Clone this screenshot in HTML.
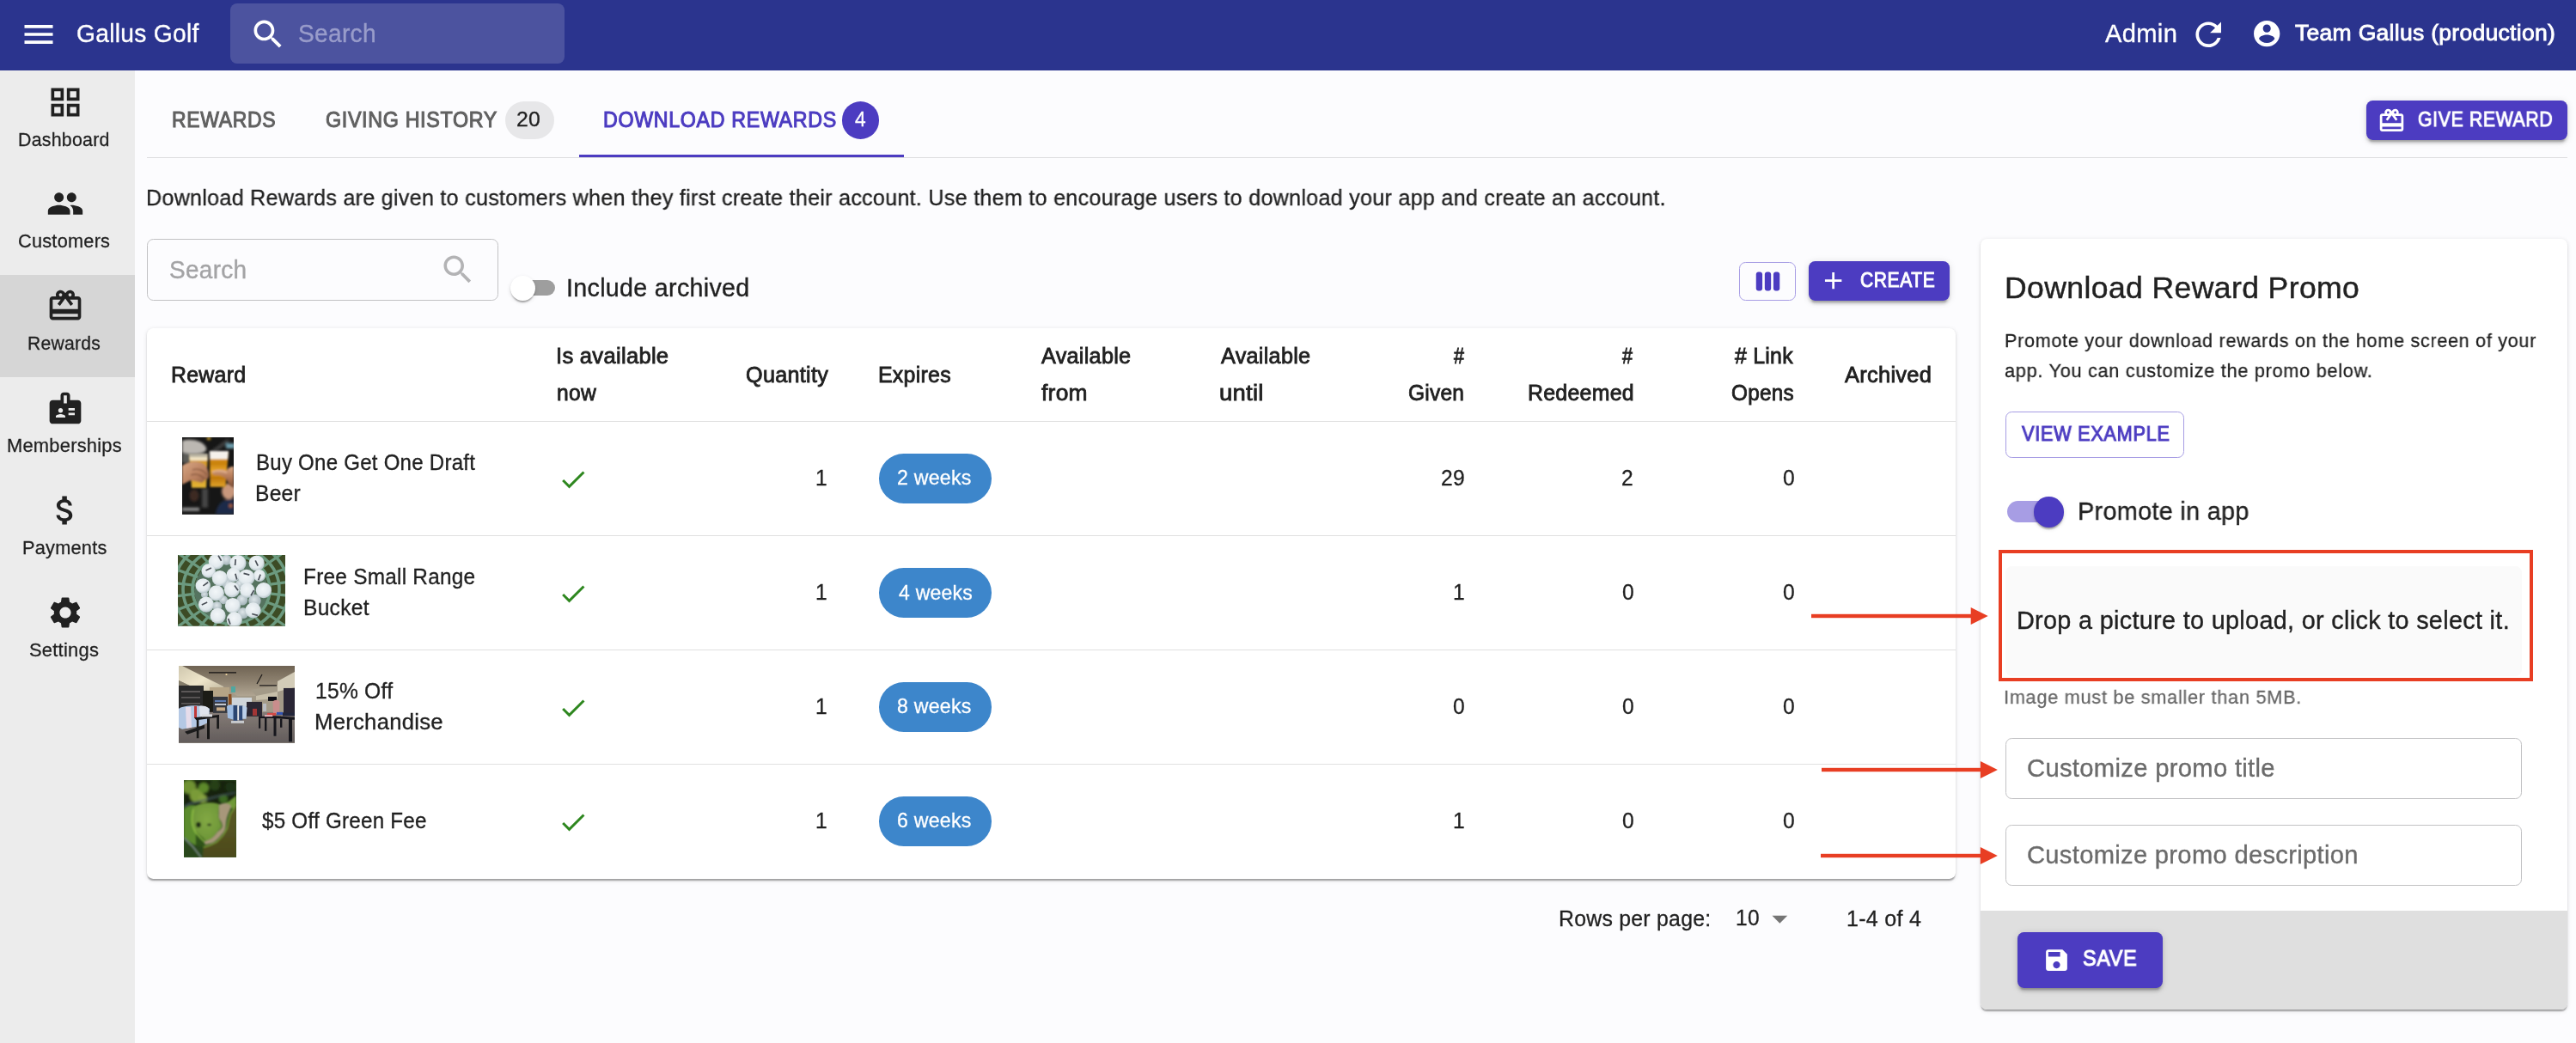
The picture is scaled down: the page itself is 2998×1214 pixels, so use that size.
<!DOCTYPE html>
<html lang="en"><head><meta charset="utf-8"><title>Gallus Golf - Download Rewards</title>
<style>
html,body{margin:0;padding:0}
html{width:2998px;height:1214px;overflow:hidden;}
body{width:2998px;height:1214px;position:relative;overflow:hidden;background:#fcfcfe;font-family:"Liberation Sans", sans-serif;}
.t{position:absolute;white-space:nowrap;line-height:1;transform-origin:0 0;}
#root{position:absolute;left:0;top:0;width:2998px;height:1214px;will-change:transform;}
.b{position:absolute;box-sizing:border-box;}
.ic{position:absolute;display:block;}
svg.th{position:absolute;display:block;}
</style></head>
<body>
<div id="root">
<div class="b" style="left:0.00px;top:0.00px;width:2998.00px;height:81.50px;background:#2b348e;"></div>
<svg class="ic" style="left:22.50px;top:18.00px;width:44.00px;height:44.00px" viewBox="0 0 24 24" fill="#fff" ><path d="M3 18h18v-2H3v2zm0-5h18v-2H3v2zm0-7v2h18V6H3z"/></svg>
<span class="t" id="brand" style="left:89.02px;top:24.35px;font-size:30.30px;color:#fff;letter-spacing:0.324px;-webkit-text-stroke:0.36px #fff;transform:scaleX(0.9303);">Gallus Golf</span>
<div class="b" style="left:268.00px;top:4.00px;width:389.00px;height:70.00px;background:rgba(255,255,255,.155);border-radius:8px;"></div>
<svg class="ic" style="left:289.50px;top:17.50px;width:44.00px;height:44.00px" viewBox="0 0 24 24" fill="#fff" ><path d="M15.5 14h-.79l-.28-.27C15.41 12.59 16 11.11 16 9.5 16 5.91 13.09 3 9.5 3S3 5.91 3 9.5 5.91 16 9.5 16c1.61 0 3.09-.59 4.23-1.57l.27.28v.79l5 4.99L20.49 19l-4.99-5zm-6 0C7.01 14 5 11.99 5 9.5S7.01 5 9.5 5 14 7.01 14 9.5 11.99 14 9.5 14z"/></svg>
<span class="t" id="absearch" style="left:347.00px;top:23.94px;font-size:29.60px;color:#999cca;letter-spacing:0.317px;-webkit-text-stroke:0.36px #999cca;transform:scaleX(0.9500);">Search</span>
<span class="t" id="admin" style="left:2450.00px;top:24.35px;font-size:30.30px;color:#fff;letter-spacing:0.324px;-webkit-text-stroke:0.36px #fff;transform:scaleX(0.9619);">Admin</span>
<svg class="ic" style="left:2547.60px;top:18.00px;width:44.40px;height:44.40px" viewBox="0 0 24 24" fill="#fff" ><path d="M17.65 6.35C16.2 4.9 14.21 4 12 4c-4.42 0-7.99 3.58-7.99 8s3.57 8 7.99 8c3.73 0 6.84-2.55 7.73-6h-2.08c-.82 2.33-3.04 4-5.65 4-3.31 0-6-2.69-6-6s2.69-6 6-6c1.66 0 3.14.69 4.22 1.78L13 11h7V4l-2.35 2.35z"/></svg>
<svg class="ic" style="left:2620.00px;top:20.50px;width:36.40px;height:36.40px" viewBox="0 0 24 24" fill="#fff" ><path d="M12 2C6.48 2 2 6.48 2 12s4.48 10 10 10 10-4.48 10-10S17.52 2 12 2zm0 3c1.66 0 3 1.34 3 3s-1.34 3-3 3-3-1.34-3-3 1.34-3 3-3zm0 14.2c-2.5 0-4.71-1.28-6-3.22.03-1.99 4-3.08 6-3.08 1.99 0 5.97 1.09 6 3.08-1.29 1.94-3.5 3.22-6 3.22z"/></svg>
<span class="t" id="team" style="left:2671.00px;top:26.08px;font-size:25.90px;color:#fff;letter-spacing:0.277px;-webkit-text-stroke:0.83px #fff;transform:scaleX(1.0244);">Team Gallus (production)</span>
<div class="b" style="left:0.00px;top:81.50px;width:157.00px;height:1132.50px;background:#ececec;"></div>
<div class="b" style="left:0.00px;top:319.80px;width:157.00px;height:118.80px;background:#d6d6d6;"></div>
<svg class="ic" style="left:53.50px;top:96.50px;width:44.00px;height:44.00px" viewBox="0 0 24 24" fill="#212121" ><path d="M3 3v8h8V3H3zm6 6H5V5h4v4zm-6 4v8h8v-8H3zm6 6H5v-4h4v4zm4-16v8h8V3h-8zm6 6h-4V5h4v4zm-6 4v8h8v-8h-8zm6 6h-4v-4h4v4z"/></svg>
<span class="t" id="side0" style="left:21.49px;top:152.21px;font-size:22.20px;color:#212121;letter-spacing:0.238px;-webkit-text-stroke:0.27px #212121;transform:scaleX(0.9632);">Dashboard</span>
<svg class="ic" style="left:53.50px;top:215.30px;width:44.00px;height:44.00px" viewBox="0 0 24 24" fill="#212121" ><path d="M16 11c1.66 0 2.99-1.34 2.99-3S17.66 5 16 5c-1.66 0-3 1.34-3 3s1.34 3 3 3zm-8 0c1.66 0 2.99-1.34 2.99-3S9.66 5 8 5C6.34 5 5 6.34 5 8s1.34 3 3 3zm0 2c-2.33 0-7 1.17-7 3.5V19h14v-2.5c0-2.33-4.67-3.5-7-3.5zm8 0c-.29 0-.62.02-.97.05 1.16.84 1.97 1.97 1.97 3.45V19h6v-2.5c0-2.33-4.67-3.5-7-3.5z"/></svg>
<span class="t" id="side1" style="left:20.98px;top:270.21px;font-size:22.20px;color:#212121;letter-spacing:0.238px;-webkit-text-stroke:0.27px #212121;transform:scaleX(0.9800);">Customers</span>
<svg class="ic" style="left:53.50px;top:334.10px;width:44.00px;height:44.00px" viewBox="0 0 24 24" fill="#212121" ><path d="M20 6h-2.18c.11-.31.18-.65.18-1 0-1.66-1.34-3-3-3-1.05 0-1.96.54-2.5 1.35l-.5.67-.5-.68C10.96 2.54 10.05 2 9 2 7.34 2 6 3.34 6 5c0 .35.07.69.18 1H4c-1.11 0-1.99.89-1.99 2L2 19c0 1.11.89 2 2 2h16c1.11 0 2-.89 2-2V8c0-1.11-.89-2-2-2zm-5-2c.55 0 1 .45 1 1s-.45 1-1 1-1-.45-1-1 .45-1 1-1zM9 4c.55 0 1 .45 1 1s-.45 1-1 1-1-.45-1-1 .45-1 1-1zm11 15H4v-2h16v2zm0-5H4V8h5.08L7 10.83 8.62 12 11 8.76l1-1.36 1 1.36L15.38 12 17 10.83 14.92 8H20v6z"/></svg>
<span class="t" id="side2" style="left:32.49px;top:389.21px;font-size:22.20px;color:#212121;letter-spacing:0.238px;-webkit-text-stroke:0.27px #212121;transform:scaleX(0.9526);">Rewards</span>
<svg class="ic" style="left:53.50px;top:452.90px;width:44.00px;height:44.00px" viewBox="0 0 24 24" fill="#212121" ><path d="M20 7h-5V4c0-1.1-.9-2-2-2h-2c-1.1 0-2 .9-2 2v3H4c-1.1 0-2 .9-2 2v11c0 1.1.9 2 2 2h16c1.1 0 2-.9 2-2V9c0-1.1-.9-2-2-2zM9 12c.83 0 1.5.67 1.5 1.5S9.83 15 9 15s-1.5-.67-1.5-1.5S8.17 12 9 12zm3 6H6v-.75c0-1 2-1.5 3-1.5s3 .5 3 1.5V18zm1-9h-2V4h2v5zm5 7.5h-4V15h4v1.5zm0-3h-4V12h4v1.5z"/></svg>
<span class="t" id="side3" style="left:7.96px;top:508.21px;font-size:22.20px;color:#212121;letter-spacing:0.238px;-webkit-text-stroke:0.27px #212121;transform:scaleX(0.9861);">Memberships</span>
<svg class="ic" style="left:53.50px;top:571.70px;width:44.00px;height:44.00px" viewBox="0 0 24 24" fill="#212121" ><path d="M11.8 10.9c-2.27-.59-3-1.2-3-2.15 0-1.09 1.01-1.85 2.7-1.85 1.78 0 2.44.85 2.5 2.1h2.21c-.07-1.72-1.12-3.3-3.21-3.81V3h-3v2.16c-1.94.42-3.5 1.68-3.5 3.61 0 2.31 1.91 3.46 4.7 4.13 2.5.6 3 1.48 3 2.41 0 .69-.49 1.79-2.7 1.79-2.06 0-2.87-.92-2.98-2.1h-2.2c.12 2.19 1.76 3.42 3.68 3.83V21h3v-2.15c1.95-.37 3.5-1.5 3.5-3.55 0-2.84-2.43-3.81-4.7-4.4z"/></svg>
<span class="t" id="side4" style="left:25.97px;top:627.21px;font-size:22.20px;color:#212121;letter-spacing:0.238px;-webkit-text-stroke:0.27px #212121;transform:scaleX(0.9803);">Payments</span>
<svg class="ic" style="left:53.50px;top:690.50px;width:44.00px;height:44.00px" viewBox="0 0 24 24" fill="#212121" ><path d="M19.14 12.94c.04-.3.06-.61.06-.94 0-.32-.02-.64-.07-.94l2.03-1.58c.18-.14.23-.41.12-.61l-1.92-3.32c-.12-.22-.37-.29-.59-.22l-2.39.96c-.5-.38-1.03-.7-1.62-.94l-.36-2.54c-.04-.24-.24-.41-.48-.41h-3.84c-.24 0-.43.17-.47.41l-.36 2.54c-.59.24-1.13.57-1.62.94l-2.39-.96c-.22-.08-.47 0-.59.22L2.74 8.87c-.12.21-.08.47.12.61l2.03 1.58c-.05.3-.09.63-.09.94s.02.64.07.94l-2.03 1.58c-.18.14-.23.41-.12.61l1.92 3.32c.12.22.37.29.59.22l2.39-.96c.5.38 1.03.7 1.62.94l.36 2.54c.05.24.24.41.48.41h3.84c.24 0 .44-.17.47-.41l.36-2.54c.59-.24 1.13-.56 1.62-.94l2.39.96c.22.08.47 0 .59-.22l1.92-3.32c.12-.22.07-.47-.12-.61l-2.01-1.58zM12 15.6c-1.98 0-3.6-1.62-3.6-3.6s1.62-3.6 3.6-3.6 3.6 1.62 3.6 3.6-1.62 3.6-3.6 3.6z"/></svg>
<span class="t" id="side5" style="left:34.44px;top:746.21px;font-size:22.20px;color:#212121;letter-spacing:0.238px;-webkit-text-stroke:0.27px #212121;transform:scaleX(0.9880);">Settings</span>
<div class="b" style="left:171.00px;top:182.90px;width:2817.00px;height:1.20px;background:#dcdcde;"></div>
<span class="t" id="tab1" style="left:200.03px;top:126.84px;font-size:25.00px;color:#616161;letter-spacing:0.715px;-webkit-text-stroke:1.05px #616161;transform:scaleX(0.9191);">REWARDS</span>
<span class="t" id="tab2" style="left:379.00px;top:126.84px;font-size:25.00px;color:#616161;letter-spacing:0.715px;-webkit-text-stroke:1.05px #616161;transform:scaleX(0.9314);">GIVING HISTORY</span>
<div class="b" style="left:588.00px;top:118.00px;width:57.00px;height:44.20px;background:#e7e7e9;border-radius:22.1px;"></div>
<span class="t" id="b20" style="left:601.27px;top:126.68px;font-size:24.00px;color:#212121;letter-spacing:0.257px;-webkit-text-stroke:0.29px #212121;transform:scaleX(1.0336);">20</span>
<span class="t" id="tab3" style="left:702.02px;top:126.84px;font-size:25.00px;color:#4c3cc1;letter-spacing:0.715px;-webkit-text-stroke:1.05px #4c3cc1;transform:scaleX(0.9294);">DOWNLOAD REWARDS</span>
<div class="b" style="left:979.70px;top:118.00px;width:43.60px;height:44.20px;background:#4c3cc1;border-radius:22.1px;"></div>
<span class="t" id="b4" style="left:995.00px;top:126.68px;font-size:24.00px;color:#fff;letter-spacing:0.257px;-webkit-text-stroke:0.29px #fff;transform:scaleX(0.9500);">4</span>
<div class="b" style="left:674.30px;top:179.60px;width:377.70px;height:3.50px;background:#4c3cc1;"></div>
<div class="b" style="left:2754.00px;top:117.10px;width:234.10px;height:45.60px;background:#4c3cc1;border-radius:7.4px;box-shadow:0 5.5px 2px -3.7px rgba(0,0,0,.2),0 3.7px 3.7px rgba(0,0,0,.14),0 1.8px 9px rgba(0,0,0,.12);"></div>
<svg class="ic" style="left:2767.20px;top:124.00px;width:33.00px;height:33.00px" viewBox="0 0 24 24" fill="#fff" ><path d="M20 6h-2.18c.11-.31.18-.65.18-1 0-1.66-1.34-3-3-3-1.05 0-1.96.54-2.5 1.35l-.5.67-.5-.68C10.96 2.54 10.05 2 9 2 7.34 2 6 3.34 6 5c0 .35.07.69.18 1H4c-1.11 0-1.99.89-1.99 2L2 19c0 1.11.89 2 2 2h16c1.11 0 2-.89 2-2V8c0-1.11-.89-2-2-2zm-5-2c.55 0 1 .45 1 1s-.45 1-1 1-1-.45-1-1 .45-1 1-1zM9 4c.55 0 1 .45 1 1s-.45 1-1 1-1-.45-1-1 .45-1 1-1zm11 15H4v-2h16v2zm0-5H4V8h5.08L7 10.83 8.62 12 11 8.76l1-1.36 1 1.36L15.38 12 17 10.83 14.92 8H20v6z"/></svg>
<span class="t" id="give" style="left:2814.04px;top:126.68px;font-size:24.00px;color:#fff;letter-spacing:0.686px;-webkit-text-stroke:1.01px #fff;transform:scaleX(0.8871);">GIVE REWARD</span>
<span class="t" id="desc" style="left:170.36px;top:218.08px;font-size:25.90px;color:#212121;letter-spacing:0.277px;-webkit-text-stroke:0.31px #212121;transform:scaleX(0.9703);">Download Rewards are given to customers when they first create their account. Use them to encourage users to download your app and create an account.</span>
<div class="b" style="left:171.20px;top:278.30px;width:408.60px;height:71.60px;border:1.5px solid #c2c2c4;border-radius:7.4px;"></div>
<span class="t" id="fsearch" style="left:196.71px;top:298.94px;font-size:29.60px;color:#a3a3a5;letter-spacing:0.317px;-webkit-text-stroke:0.36px #a3a3a5;transform:scaleX(0.9459);">Search</span>
<svg class="ic" style="left:510.60px;top:291.60px;width:43.50px;height:43.50px" viewBox="0 0 24 24" fill="#b3b3b5" ><path d="M15.5 14h-.79l-.28-.27C15.41 12.59 16 11.11 16 9.5 16 5.91 13.09 3 9.5 3S3 5.91 3 9.5 5.91 16 9.5 16c1.61 0 3.09-.59 4.23-1.57l.27.28v.79l5 4.99L20.49 19l-4.99-5zm-6 0C7.01 14 5 11.99 5 9.5S7.01 5 9.5 5 14 7.01 14 9.5 11.99 14 9.5 14z"/></svg>
<div class="b" style="left:609.00px;top:326.10px;width:37.00px;height:17.60px;background:#9e9e9e;border-radius:9px;"></div>
<div class="b" style="left:594.00px;top:321.00px;width:29.00px;height:29.00px;background:#fff;border-radius:50%;box-shadow:0 3.7px 2px -1.8px rgba(0,0,0,.2),0 1.8px 1.8px rgba(0,0,0,.14),0 1.8px 5.5px rgba(0,0,0,.12);"></div>
<span class="t" id="incl" style="left:658.56px;top:319.94px;font-size:29.60px;color:#212121;letter-spacing:0.317px;-webkit-text-stroke:0.36px #212121;transform:scaleX(0.9684);">Include archived</span>
<div class="b" style="left:2024.00px;top:305.20px;width:65.80px;height:44.40px;border:1.3px solid #a79de4;border-radius:7.4px;"></div>
<svg class="ic" style="left:2040.75px;top:310.50px;width:33.00px;height:33.00px" viewBox="0 0 24 24" fill="#4c3cc1" ><path d="M5.33 20H4c-1.1 0-2-.9-2-2V6c0-1.1.9-2 2-2h1.33c1.1 0 2 .9 2 2v12c0 1.1-.9 2-2 2zM22 18V6c0-1.1-.9-2-2-2h-1.33c-1.1 0-2 .9-2 2v12c0 1.1.9 2 2 2H20c1.1 0 2-.9 2-2zm-7.33 0V6c0-1.1-.9-2-2-2h-1.33c-1.1 0-2 .9-2 2v12c0 1.1.9 2 2 2h1.33c1.1 0 2-.9 2-2z"/></svg>
<div class="b" style="left:2105.00px;top:304.00px;width:164.10px;height:45.60px;background:#4c3cc1;border-radius:7.4px;box-shadow:0 5.5px 2px -3.7px rgba(0,0,0,.2),0 3.7px 3.7px rgba(0,0,0,.14),0 1.8px 9px rgba(0,0,0,.12);"></div>
<svg class="ic" style="left:2116.50px;top:310.30px;width:33.30px;height:33.30px" viewBox="0 0 24 24" fill="#fff" ><path d="M19 13h-6v6h-2v-6H5v-2h6V5h2v6h6v2z"/></svg>
<span class="t" id="create" style="left:2165.37px;top:313.68px;font-size:24.00px;color:#fff;letter-spacing:0.686px;-webkit-text-stroke:1.01px #fff;transform:scaleX(0.8768);">CREATE</span>
<div class="b" style="left:171.00px;top:381.60px;width:2105.10px;height:641.00px;background:#fff;border-radius:7.4px;box-shadow:0 3.7px 1.8px -1.8px rgba(0,0,0,.2),0 1.8px 1.8px rgba(0,0,0,.14),0 1.8px 5.5px rgba(0,0,0,.12);"></div>
<span class="t" id="h_reward" style="left:198.99px;top:424.08px;font-size:25.90px;color:#212121;letter-spacing:0.277px;-webkit-text-stroke:0.83px #212121;transform:scaleX(0.9613);">Reward</span>
<span class="t" id="h_isav" style="left:646.91px;top:402.08px;font-size:25.90px;color:#212121;letter-spacing:0.277px;-webkit-text-stroke:0.83px #212121;transform:scaleX(0.9889);">Is available</span>
<span class="t" id="t1" style="left:648.00px;top:445.08px;font-size:25.90px;color:#212121;letter-spacing:0.277px;-webkit-text-stroke:0.83px #212121;transform:scaleX(0.9500);">now</span>
<span class="t" id="h_qty" style="left:868.46px;top:424.08px;font-size:25.90px;color:#212121;letter-spacing:0.277px;-webkit-text-stroke:0.83px #212121;transform:scaleX(0.9739);">Quantity</span>
<span class="t" id="h_exp" style="left:1022.47px;top:424.08px;font-size:25.90px;color:#212121;letter-spacing:0.277px;-webkit-text-stroke:0.83px #212121;transform:scaleX(0.9616);">Expires</span>
<span class="t" id="h_av1" style="left:1212.01px;top:402.08px;font-size:25.90px;color:#212121;letter-spacing:0.277px;-webkit-text-stroke:0.83px #212121;transform:scaleX(0.9748);">Available</span>
<span class="t" id="h_from" style="left:1211.79px;top:445.08px;font-size:25.90px;color:#212121;letter-spacing:0.277px;-webkit-text-stroke:0.83px #212121;transform:scaleX(1.0184);">from</span>
<span class="t" id="h_av2" style="left:1420.51px;top:402.08px;font-size:25.90px;color:#212121;letter-spacing:0.277px;-webkit-text-stroke:0.83px #212121;transform:scaleX(0.9748);">Available</span>
<span class="t" id="h_until" style="left:1418.74px;top:445.08px;font-size:25.90px;color:#212121;letter-spacing:0.277px;-webkit-text-stroke:0.83px #212121;transform:scaleX(1.0585);">until</span>
<span class="t" id="h_hash1" style="left:1691.96px;top:402.08px;font-size:25.90px;color:#212121;letter-spacing:0.277px;-webkit-text-stroke:0.83px #212121;transform:scaleX(0.8316);">#</span>
<span class="t" id="h_given" style="left:1639.41px;top:445.08px;font-size:25.90px;color:#212121;letter-spacing:0.277px;-webkit-text-stroke:0.83px #212121;transform:scaleX(0.9452);">Given</span>
<span class="t" id="h_hash2" style="left:1887.66px;top:402.08px;font-size:25.90px;color:#212121;letter-spacing:0.277px;-webkit-text-stroke:0.83px #212121;transform:scaleX(0.8315);">#</span>
<span class="t" id="h_red" style="left:1778.08px;top:445.08px;font-size:25.90px;color:#212121;letter-spacing:0.277px;-webkit-text-stroke:0.83px #212121;transform:scaleX(0.9613);">Redeemed</span>
<span class="t" id="h_link" style="left:2019.38px;top:402.08px;font-size:25.90px;color:#212121;letter-spacing:0.277px;-webkit-text-stroke:0.83px #212121;transform:scaleX(0.9596);"># Link</span>
<span class="t" id="h_opens" style="left:2015.37px;top:445.08px;font-size:25.90px;color:#212121;letter-spacing:0.277px;-webkit-text-stroke:0.83px #212121;transform:scaleX(0.9379);">Opens</span>
<span class="t" id="h_arch" style="left:2147.24px;top:424.08px;font-size:25.90px;color:#212121;letter-spacing:0.277px;-webkit-text-stroke:0.83px #212121;transform:scaleX(0.9826);">Archived</span>
<div class="b" style="left:171.00px;top:490.00px;width:2105.00px;height:1.20px;background:#e0e0e0;"></div>
<span class="t" id="r0a" style="left:298.04px;top:526.13px;font-size:25.90px;color:#212121;letter-spacing:0.277px;-webkit-text-stroke:0.31px #212121;transform:scaleX(0.9280);">Buy One Get One Draft</span>
<span class="t" id="r0b" style="left:297.00px;top:561.83px;font-size:25.90px;color:#212121;letter-spacing:0.277px;-webkit-text-stroke:0.31px #212121;transform:scaleX(0.9500);">Beer</span>
<svg class="ic" style="left:649.10px;top:540.15px;width:36.00px;height:36.00px" viewBox="0 0 24 24" fill="#2e871f" ><path d="M9 16.17 4.83 12l-1.42 1.41L9 19 21 7l-1.41-1.41z"/></svg>
<span class="t" id="t2" style="left:948.60px;top:543.98px;font-size:25.90px;color:#212121;letter-spacing:0.277px;-webkit-text-stroke:0.31px #212121;transform:scaleX(0.9500);">1</span>
<div class="b" style="left:1023.00px;top:528.10px;width:131.00px;height:57.60px;background:#3d86cb;border-radius:28.8px;"></div>
<span class="t" id="chip0" style="left:1044.32px;top:543.98px;font-size:24.00px;color:#fff;letter-spacing:0.257px;-webkit-text-stroke:0.29px #fff;transform:scaleX(0.9642);">2 weeks</span>
<span class="t" id="t3" style="left:1676.70px;top:543.98px;font-size:25.90px;color:#212121;letter-spacing:0.277px;-webkit-text-stroke:0.31px #212121;transform:scaleX(0.9500);">29</span>
<span class="t" id="t4" style="left:1886.80px;top:543.98px;font-size:25.90px;color:#212121;letter-spacing:0.277px;-webkit-text-stroke:0.31px #212121;transform:scaleX(0.9500);">2</span>
<span class="t" id="t5" style="left:2074.70px;top:543.98px;font-size:25.90px;color:#212121;letter-spacing:0.277px;-webkit-text-stroke:0.31px #212121;transform:scaleX(0.9500);">0</span>
<div class="b" style="left:171.00px;top:623.20px;width:2105.00px;height:1.20px;background:#e0e0e0;"></div>
<span class="t" id="r1a" style="left:353.02px;top:659.33px;font-size:25.90px;color:#212121;letter-spacing:0.277px;-webkit-text-stroke:0.31px #212121;transform:scaleX(0.9405);">Free Small Range</span>
<span class="t" id="r1b" style="left:353.00px;top:695.03px;font-size:25.90px;color:#212121;letter-spacing:0.277px;-webkit-text-stroke:0.31px #212121;transform:scaleX(0.9500);">Bucket</span>
<svg class="ic" style="left:649.10px;top:673.35px;width:36.00px;height:36.00px" viewBox="0 0 24 24" fill="#2e871f" ><path d="M9 16.17 4.83 12l-1.42 1.41L9 19 21 7l-1.41-1.41z"/></svg>
<span class="t" id="t6" style="left:949.00px;top:677.18px;font-size:25.90px;color:#212121;letter-spacing:0.277px;-webkit-text-stroke:0.31px #212121;transform:scaleX(0.9500);">1</span>
<div class="b" style="left:1023.00px;top:661.30px;width:131.00px;height:57.60px;background:#3d86cb;border-radius:28.8px;"></div>
<span class="t" id="chip1" style="left:1045.56px;top:678.18px;font-size:24.00px;color:#fff;letter-spacing:0.257px;-webkit-text-stroke:0.29px #fff;transform:scaleX(0.9581);">4 weeks</span>
<span class="t" id="t7" style="left:1691.00px;top:677.18px;font-size:25.90px;color:#212121;letter-spacing:0.277px;-webkit-text-stroke:0.31px #212121;transform:scaleX(0.9500);">1</span>
<span class="t" id="t8" style="left:1887.50px;top:677.18px;font-size:25.90px;color:#212121;letter-spacing:0.277px;-webkit-text-stroke:0.31px #212121;transform:scaleX(0.9500);">0</span>
<span class="t" id="t9" style="left:2075.00px;top:677.18px;font-size:25.90px;color:#212121;letter-spacing:0.277px;-webkit-text-stroke:0.31px #212121;transform:scaleX(0.9500);">0</span>
<div class="b" style="left:171.00px;top:756.00px;width:2105.00px;height:1.20px;background:#e0e0e0;"></div>
<span class="t" id="r2a" style="left:367.00px;top:792.13px;font-size:25.90px;color:#212121;letter-spacing:0.277px;-webkit-text-stroke:0.31px #212121;transform:scaleX(0.9500);">15% Off</span>
<span class="t" id="r2b" style="left:365.91px;top:827.83px;font-size:25.90px;color:#212121;letter-spacing:0.277px;-webkit-text-stroke:0.31px #212121;transform:scaleX(0.9906);">Merchandise</span>
<svg class="ic" style="left:649.10px;top:806.15px;width:36.00px;height:36.00px" viewBox="0 0 24 24" fill="#2e871f" ><path d="M9 16.17 4.83 12l-1.42 1.41L9 19 21 7l-1.41-1.41z"/></svg>
<span class="t" id="t10" style="left:949.00px;top:809.98px;font-size:25.90px;color:#212121;letter-spacing:0.277px;-webkit-text-stroke:0.31px #212121;transform:scaleX(0.9500);">1</span>
<div class="b" style="left:1023.00px;top:794.10px;width:131.00px;height:57.60px;background:#3d86cb;border-radius:28.8px;"></div>
<span class="t" id="chip2" style="left:1044.32px;top:809.98px;font-size:24.00px;color:#fff;letter-spacing:0.257px;-webkit-text-stroke:0.29px #fff;transform:scaleX(0.9642);">8 weeks</span>
<span class="t" id="t11" style="left:1691.00px;top:809.98px;font-size:25.90px;color:#212121;letter-spacing:0.277px;-webkit-text-stroke:0.31px #212121;transform:scaleX(0.9500);">0</span>
<span class="t" id="t12" style="left:1887.50px;top:809.98px;font-size:25.90px;color:#212121;letter-spacing:0.277px;-webkit-text-stroke:0.31px #212121;transform:scaleX(0.9500);">0</span>
<span class="t" id="t13" style="left:2075.00px;top:809.98px;font-size:25.90px;color:#212121;letter-spacing:0.277px;-webkit-text-stroke:0.31px #212121;transform:scaleX(0.9500);">0</span>
<div class="b" style="left:171.00px;top:889.00px;width:2105.00px;height:1.20px;background:#e0e0e0;"></div>
<span class="t" id="r3a" style="left:305.00px;top:942.98px;font-size:25.90px;color:#212121;letter-spacing:0.277px;-webkit-text-stroke:0.31px #212121;transform:scaleX(0.9334);">$5 Off Green Fee</span>
<svg class="ic" style="left:649.10px;top:939.15px;width:36.00px;height:36.00px" viewBox="0 0 24 24" fill="#2e871f" ><path d="M9 16.17 4.83 12l-1.42 1.41L9 19 21 7l-1.41-1.41z"/></svg>
<span class="t" id="t14" style="left:949.00px;top:942.98px;font-size:25.90px;color:#212121;letter-spacing:0.277px;-webkit-text-stroke:0.31px #212121;transform:scaleX(0.9500);">1</span>
<div class="b" style="left:1023.00px;top:927.10px;width:131.00px;height:57.60px;background:#3d86cb;border-radius:28.8px;"></div>
<span class="t" id="chip3" style="left:1044.32px;top:942.98px;font-size:24.00px;color:#fff;letter-spacing:0.257px;-webkit-text-stroke:0.29px #fff;transform:scaleX(0.9642);">6 weeks</span>
<span class="t" id="t15" style="left:1691.00px;top:942.98px;font-size:25.90px;color:#212121;letter-spacing:0.277px;-webkit-text-stroke:0.31px #212121;transform:scaleX(0.9500);">1</span>
<span class="t" id="t16" style="left:1887.50px;top:942.98px;font-size:25.90px;color:#212121;letter-spacing:0.277px;-webkit-text-stroke:0.31px #212121;transform:scaleX(0.9500);">0</span>
<span class="t" id="t17" style="left:2075.00px;top:942.98px;font-size:25.90px;color:#212121;letter-spacing:0.277px;-webkit-text-stroke:0.31px #212121;transform:scaleX(0.9500);">0</span>
<svg class="th" style="left:212.00px;top:509.00px;width:60.00px;height:89.80px" viewBox="0 0 60 90" preserveAspectRatio="none">
<defs>
<linearGradient id="bg1" x1="0" y1="0" x2="0" y2="1"><stop offset="0" stop-color="#d9a233"/><stop offset=".6" stop-color="#cf9422"/><stop offset="1" stop-color="#e6b836"/></linearGradient>
<linearGradient id="bg2" x1="0" y1="0" x2="0" y2="1"><stop offset="0" stop-color="#e59f1e"/><stop offset=".35" stop-color="#c9820f"/><stop offset=".55" stop-color="#e8a728"/><stop offset=".75" stop-color="#bf780e"/><stop offset="1" stop-color="#e3a62a"/></linearGradient>
<linearGradient id="hand1" x1="0" y1="0" x2="1" y2="1"><stop offset="0" stop-color="#d7a684"/><stop offset=".6" stop-color="#b87f5e"/><stop offset="1" stop-color="#8a5a40"/></linearGradient>
<linearGradient id="hand2" x1="0" y1="0" x2="0" y2="1"><stop offset="0" stop-color="#dba884"/><stop offset=".5" stop-color="#b47a58"/><stop offset="1" stop-color="#7d4e36"/></linearGradient>
<filter id="bl1" x="-10%" y="-10%" width="120%" height="120%"><feGaussianBlur stdDeviation="0.9"/></filter>
<filter id="bl1b" x="-10%" y="-10%" width="120%" height="120%"><feGaussianBlur stdDeviation="1.8"/></filter>
<clipPath id="cb"><rect width="60" height="90"/></clipPath>
</defs>
<rect width="60" height="90" fill="#161616"/>
<g clip-path="url(#cb)">
<g filter="url(#bl1b)">
<path d="M0 4 C10 1 24 4 28 12 C30 18 20 20 8 19 L0 18 Z" fill="#bcb8b2"/>
<rect x="0" y="19" width="26" height="11" fill="#5c5b58"/>
<path d="M30 18 L52 2 L56 4 L34 22 Z" fill="#3a3a3a"/>
<rect x="51" y="7" width="10" height="6" fill="#6d9cab"/>
<rect x="29" y="0" width="4" height="3" fill="#d8a92a"/>
<ellipse cx="14" cy="68" rx="5.5" ry="7" fill="#3d2a22"/>
<rect x="23" y="60" width="7" height="22" fill="#444"/>
<ellipse cx="54" cy="63" rx="8" ry="9.5" fill="#c8977c"/>
<path d="M39 90 C40 78 48 71 60 72 L60 90 Z" fill="#1f2b49"/>
<rect x="0" y="82" width="20" height="4" fill="#8d8d8d"/>
<circle cx="56.5" cy="80" r="2" fill="#b8683a"/>
</g>
<g filter="url(#bl1)">
<path d="M8 19 L30 19 L28 59 L11 59 Z" fill="url(#bg1)"/>
<path d="M8 19 L30 19 L29.8 23 L8.2 23 Z" fill="#b9b3a2"/>
<path d="M8.3 23 L29.8 23 L29.6 27 L8.6 27 Z" fill="#f1e3c2"/>
<path d="M32 16 L54 16 L50.5 58 L32.5 58 Z" fill="url(#bg2)"/>
<path d="M32 16 L54 16 L53.2 25.5 L32.1 25.5 Z" fill="#f5f1eb"/>
<path d="M0 33 C6 28 16 27 23 30 C28 32 31 38 31 44 C31 48 29 50 27 49 C25 52 22 54 20 52 L10 50 L0 55 Z" fill="url(#hand1)"/>
<path d="M12 38 C18 36 25 38 29 44 M10 44 C16 42 22 44 26 49" stroke="#8a5a40" stroke-width="1.4" fill="none"/>
<path d="M60 34 C56 34 53 36 52 39 C46 37 38 38 35 40 C34 42 36 44 40 44 C45 44 50 46 52 50 C54 55 57 58 60 58 Z" fill="url(#hand2)"/>
<path d="M35 40.5 C40 38.5 47 39 52 41" stroke="#e6b794" stroke-width="1.6" fill="none"/>
</g>
</g>
</svg>
<svg class="th" style="left:207.00px;top:646.00px;width:125.00px;height:82.80px" viewBox="0 0 125 83" preserveAspectRatio="none">
<defs>
<radialGradient id="ball" cx=".45" cy=".4" r=".65"><stop offset="0" stop-color="#f2f6f8"/><stop offset=".65" stop-color="#e2e9ed"/><stop offset="1" stop-color="#a9babf"/></radialGradient>
<radialGradient id="ballb" cx=".45" cy=".4" r=".65"><stop offset="0" stop-color="#dfe6ea"/><stop offset="1" stop-color="#9fb0b5"/></radialGradient>
<filter id="bl2" x="-5%" y="-5%" width="110%" height="110%"><feGaussianBlur stdDeviation="0.6"/></filter>
<clipPath id="cg"><rect width="125" height="83"/></clipPath>
</defs>
<rect width="125" height="83" fill="#3c4b25"/>
<g clip-path="url(#cg)"><g filter="url(#bl2)">
<g fill="none" stroke="#6c9a7f" stroke-width="3.6">
<ellipse cx="62" cy="40" rx="45" ry="40"/>
<ellipse cx="62" cy="40" rx="56" ry="50"/>
<ellipse cx="62" cy="40" rx="67" ry="60"/>
<ellipse cx="62" cy="40" rx="79" ry="71"/>
<path d="M101.7 44.4 L161.3 51.0 M99.1 53.5 L154.7 73.7 M93.9 61.7 L141.9 94.2 M86.6 68.4 L123.6 110.9 M77.6 73.1 L101.1 122.8 M67.6 75.6 L75.9 129.1 M57.1 75.7 L49.8 129.3 M47.0 73.4 L24.5 123.4 M37.9 68.8 L1.8 111.9 M30.5 62.2 L-16.8 95.4 M25.2 54.1 L-30.1 75.2 M22.4 45.0 L-37.0 52.5 M22.3 35.6 L-37.3 29.0 M24.9 26.5 L-30.7 6.3 M30.1 18.3 L-17.9 -14.2 M37.4 11.6 L0.4 -30.9 M46.4 6.9 L22.9 -42.8 M56.4 4.4 L48.1 -49.1 M66.9 4.3 L74.2 -49.3 M77.0 6.6 L99.5 -43.4 M86.1 11.2 L122.2 -31.9 M93.5 17.8 L140.8 -15.4 M98.8 25.9 L154.1 4.8 M101.6 35.0 L161.0 27.5 " stroke-width="3.2"/></g><ellipse cx="62" cy="41" rx="43" ry="38" fill="#55735e"/><circle cx="45.7" cy="59.6" r="5.5" fill="url(#ballb)"/><circle cx="74.9" cy="52.3" r="6.4" fill="url(#ballb)"/><circle cx="89.4" cy="53.2" r="7.3" fill="url(#ballb)"/><circle cx="75.8" cy="67.8" r="6.4" fill="url(#ballb)"/><circle cx="56.6" cy="5.8" r="6" fill="url(#ballb)"/><circle cx="53" cy="52.3" r="5" fill="url(#ballb)"/><circle cx="31" cy="46" r="4" fill="url(#ballb)"/><circle cx="57" cy="33" r="6" fill="url(#ballb)"/><circle cx="72" cy="34" r="5" fill="url(#ballb)"/><circle cx="44.8" cy="7.7" r="9.1" fill="url(#ball)"/><circle cx="91.7" cy="9.5" r="9.1" fill="url(#ball)"/><circle cx="69.9" cy="9.5" r="9.6" fill="url(#ball)"/><circle cx="35.7" cy="18.6" r="8.2" fill="url(#ball)"/><circle cx="94.9" cy="24" r="7" fill="url(#ball)"/><circle cx="64.8" cy="23.1" r="8.2" fill="url(#ball)"/><circle cx="48.9" cy="27.2" r="9.1" fill="url(#ball)"/><circle cx="79.9" cy="26.3" r="9.6" fill="url(#ball)"/><circle cx="29.3" cy="35.9" r="8.7" fill="url(#ball)"/><circle cx="99.9" cy="41.3" r="9.1" fill="url(#ball)"/><circle cx="80.8" cy="41.3" r="8.7" fill="url(#ball)"/><circle cx="63" cy="40.4" r="9.1" fill="url(#ball)"/><circle cx="44.8" cy="44.5" r="9.1" fill="url(#ball)"/><circle cx="33" cy="57.7" r="9.1" fill="url(#ball)"/><circle cx="87.6" cy="64.6" r="9.1" fill="url(#ball)"/><circle cx="63.9" cy="59.1" r="9.1" fill="url(#ball)"/><circle cx="46.6" cy="70.9" r="9.1" fill="url(#ball)"/><circle cx="65.8" cy="75.5" r="9.1" fill="url(#ball)"/><rect x="45.3" y="2.85" width="7" height="1.7" fill="#4a4f57" transform="rotate(60 48.8 3.7)"/><rect x="63.4" y="7.65" width="7" height="1.7" fill="#4a4f57" transform="rotate(95 66.9 8.5)"/><rect x="88.2" y="8.65" width="7" height="1.7" fill="#4a4f57" transform="rotate(65 91.7 9.5)"/><rect x="32.2" y="15.75" width="7" height="1.7" fill="#4a4f57" transform="rotate(-25 35.7 16.6)"/><rect x="64.3" y="24.25" width="7" height="1.7" fill="#4a4f57" transform="rotate(75 67.8 25.1)"/><rect x="76.4" y="21.45" width="7" height="1.7" fill="#4a4f57" transform="rotate(15 79.9 22.3)"/><rect x="91.4" y="25.15" width="7" height="1.7" fill="#4a4f57" transform="rotate(110 94.9 26)"/><rect x="28.8" y="33.05" width="7" height="1.7" fill="#4a4f57" transform="rotate(-35 32.3 33.9)"/><rect x="64.5" y="37.55" width="7" height="1.7" fill="#4a4f57" transform="rotate(55 68 38.4)"/><rect x="27.5" y="55.85" width="7" height="1.7" fill="#4a4f57" transform="rotate(-25 31 56.7)"/><rect x="86.1" y="68.75" width="7" height="1.7" fill="#4a4f57" transform="rotate(15 89.6 69.6)"/><rect x="56.3" y="76.65" width="7" height="1.7" fill="#4a4f57" transform="rotate(70 59.8 77.5)"/><rect x="83.3" y="43.45" width="7" height="1.7" fill="#4a4f57" transform="rotate(120 86.8 44.3)"/></g></g></svg>
<svg class="th" style="left:208.00px;top:775.00px;width:135.00px;height:89.80px" viewBox="0 0 135 90" preserveAspectRatio="none">
<defs>
<linearGradient id="ceil" x1="0" y1="0" x2="0" y2="1"><stop offset="0" stop-color="#6f6353"/><stop offset=".5" stop-color="#8d816f"/><stop offset="1" stop-color="#b0a592"/></linearGradient>
<linearGradient id="floor" x1="0" y1="0" x2="0" y2="1"><stop offset="0" stop-color="#847b76"/><stop offset="1" stop-color="#625c5b"/></linearGradient>
<linearGradient id="lwall" x1="0" y1="0" x2="1" y2="1"><stop offset="0" stop-color="#cfc7ae"/><stop offset=".5" stop-color="#efe6cb"/><stop offset="1" stop-color="#b9b098"/></linearGradient>
<filter id="bl3" x="-5%" y="-5%" width="110%" height="110%"><feGaussianBlur stdDeviation="0.55"/></filter>
<clipPath id="cs"><rect width="135" height="90"/></clipPath>
</defs>
<rect width="135" height="90" fill="#8a8273"/>
<g clip-path="url(#cs)"><g filter="url(#bl3)">
<rect x="0" y="20" width="135" height="40" fill="#a39a88"/>
<path d="M4 0 H135 V7 L115 18 V23 L84 28 L90 35 L68 35 L52 24 Z" fill="url(#ceil)"/>
<path d="M0 0 H4 L52 24 V34 L34 33 L0 17 Z" fill="url(#lwall)"/>
<path d="M0 17 L34 33 V36 L0 23 Z" fill="#857d6b"/>
<path d="M135 7 L115 18 V30 L135 25 Z" fill="#d3ccb8"/>
<path d="M90 35 L115 30 V38 L90 40 Z" fill="#c6bea9"/>
<rect x="36" y="25" width="23" height="13" fill="#b5a486"/>
<rect x="62" y="37" width="23" height="10" fill="#cfd5da"/>
<rect x="0" y="54" width="135" height="36" fill="url(#floor)"/>
<rect x="0" y="23" width="29" height="30" fill="#2a292c"/>
<path d="M3 30 h22 M3 37 h22 M3 44 h22" stroke="#6d6a68" stroke-width="1.4"/>
<rect x="28" y="29" width="12" height="25" fill="#1e1a18"/>
<rect x="40" y="36" width="17" height="19" fill="#34373f"/>
<rect x="42" y="40" width="13" height="2.2" fill="#5d7db4"/>
<rect x="42" y="44" width="13" height="2" fill="#c9ced6"/>
<rect x="44" y="48.5" width="10" height="4" fill="#c7aa86"/>
<rect x="58" y="33" width="3.4" height="14" fill="#8b4f22"/>
<rect x="61" y="24" width="5" height="7" fill="#4fa7a0"/>
<rect x="104" y="36" width="10" height="5" fill="#0f0f12"/>
<rect x="122" y="26" width="13" height="31" fill="#2a2634"/>
<rect x="79" y="42" width="18" height="17" fill="#2b2730"/>
<rect x="86" y="50" width="5" height="8" fill="#a23434"/>
<rect x="98" y="44" width="4" height="9" fill="#b9bcc2"/>
<path d="M109.5 42 C111 39 116 39 117.5 42 L117 56 L110 56 Z" fill="#c98d8c"/>
<path d="M0 50 C6 45 30 45 36 50 L35 66 L26 70 L4 74 L0 72 Z" fill="#b4c8e4"/>
<path d="M8 48 L14 48 L15 72 L9 73 Z" fill="#e6dcea"/>
<rect x="18" y="47" width="3" height="14" fill="#c13838"/>
<path d="M24 47 C28 46 33 47 35 50 L35 62 L25 62 Z" fill="#dfe3ec"/>
<path d="M56 47 C58 45 62 45 64 46 L64 63 L57 61 Z" fill="#9fbde2"/>
<rect x="63.5" y="46" width="5" height="19" fill="#2b4470"/>
<rect x="68.3" y="46.5" width="2" height="17" fill="#e5e8ec"/>
<rect x="70.2" y="46.5" width="4.2" height="17" fill="#2f4a78"/>
<path d="M74.2 47 C77 46 79 47 79.5 49 L78.5 62 L74.2 62 Z" fill="#bcd0ea"/>
<rect x="61" y="64" width="15" height="3" fill="#c7cace"/>
<path d="M18 60.5 L47 57.2 V59.8 L20.5 63.5 Z" fill="#141418"/>
<path d="M20.8 63 h2.6 v21.5 h-2.6 Z M33 61.5 h3 v24 h-3 Z M44.3 59.5 h2.6 v14 h-2.6 Z" fill="#141418"/>
<path d="M7 77 L30 69 L30 73 L10 80 Z" fill="#1a1a1d"/>
<rect x="27" y="56.5" width="12" height="3" fill="#d9dbe0"/>
<path d="M93 59 H119 V61.2 H93 Z M93 61 h2.2 v12 h-2.2 Z M100 61 h2.4 v15 h-2.4 Z" fill="#15151a"/>
<path d="M110 58.5 L135 60 V63 L110 61 Z M110.5 61 h3 v21 h-3 Z M128 62.5 h4 v26 h-4 Z M118 62 h2.4 v10 h-2.4 Z" fill="#17171c"/>
<rect x="103" y="55" width="10" height="3" fill="#d24a44"/>
<rect x="114" y="54" width="7" height="3" fill="#3253b3"/>
<rect x="100" y="57.3" width="9" height="2" fill="#e6b3bb"/>
<rect x="121" y="54.5" width="14" height="4" fill="#24283a"/>
<rect x="35" y="7.2" width="32" height="1.4" fill="#1d1b19"/>
<path d="M97 10 L91 21 M94 23 L114 23" stroke="#1d1b19" stroke-width="1.2"/>
<circle cx="55.5" cy="10" r="1.1" fill="#f2d9a0"/>
</g></g>
</svg>
<svg class="th" style="left:214.00px;top:908.00px;width:61.00px;height:89.90px" viewBox="0 0 61 90" preserveAspectRatio="none">
<defs>
<filter id="bl4" x="-5%" y="-5%" width="110%" height="110%"><feGaussianBlur stdDeviation="0.8"/></filter>
<filter id="bl4b" x="-10%" y="-10%" width="120%" height="120%"><feGaussianBlur stdDeviation="1.6"/></filter>
<radialGradient id="gr" cx=".5" cy=".45" r=".6"><stop offset="0" stop-color="#82a844"/><stop offset="1" stop-color="#6b9436"/></radialGradient>
<linearGradient id="wat" x1="0" y1="0" x2="0" y2="1"><stop offset="0" stop-color="#5b5a26"/><stop offset="1" stop-color="#4d4a1c"/></linearGradient>
<clipPath id="cgr"><rect width="61" height="90"/></clipPath>
</defs>
<rect width="61" height="90" fill="#2f5319"/>
<g clip-path="url(#cgr)">
<g filter="url(#bl4b)">
<rect width="61" height="30" fill="#15240e"/>
<circle cx="6" cy="8" r="8" fill="#6f9233"/>
<circle cx="15" cy="18" r="8" fill="#7a9b38"/>
<circle cx="23" cy="9" r="6" fill="#5d8a2c"/>
<circle cx="22" cy="22" r="5" fill="#86a340"/>
<circle cx="36" cy="6" r="6" fill="#263f17"/>
<circle cx="46" cy="22" r="5" fill="#3e6a22"/>
<circle cx="54" cy="8" r="6" fill="#1d3212"/>
<path d="M0 31 L6 27 L38 18.5 L60 14 L60 15.2 L38 20 L8 28.5 L0 33.5 Z" fill="#46595a"/>
</g>
<g filter="url(#bl4)">
<path d="M0 34 C4 30 10 28 14 30 L14 76 C8 74 2 70 0 66 Z" fill="#5b8c2e"/>
<path d="M61 18 L52 25 L40 29 L61 34 Z" fill="#6f9a38"/>
<path d="M10 32 C18 26 34 25 41 28 C41 34 40 40 40.5 43 C41 47 44 50 44 54 C42 58 38 61 36 64 C34 67 31 70 27 71 C25 71 24 70 23 68 C16 62 9 56 9 46 C9 40 9 36 10 32 Z" fill="url(#gr)"/>
<path d="M11 34 C9 42 9 52 12 58 C15 64 20 68 24 72" stroke="#8fbf44" stroke-width="1.6" fill="none"/>
<path d="M41.2 28.5 C45 26.5 52 26 54.8 29.7 C54.5 34 52.5 37 51.3 40.2 C50.3 43 49.6 45.5 49.3 48.3 C49 51 48.8 53.5 48.3 56.3 C47.3 59.5 45.3 62 43.3 64.4 C41 67 38.8 69.5 36.2 71.4 C33 73.5 29 75 25.2 75 C23.5 74 23.5 72 24.1 71.4 C28 70.8 31.5 69 34.2 66.4 C36 64.5 37.8 62.5 39.2 60.4 C41.5 58.5 44 56.5 44.8 54.3 C45 52 44 50 43.3 48.3 C41.5 46 40.2 43 40.7 40.2 C41 36 40.8 32 41.2 28.5 Z" fill="#a7977a"/>
<path d="M61 29 L57.5 35 L54.3 40 L52.3 48 L50.8 56 L46.3 64 L38.7 72 L30 76.5 L23 78.5 L22 90 L61 90 Z" fill="url(#wat)"/>
<path d="M61 28 L57 35 L53.8 40 L51.8 48 L50.3 56 L45.8 64 L38.2 72 L30 76 L23 78" stroke="#7d9c38" stroke-width="1.5" fill="none"/>
<path d="M0 66 C6 72 12 76 22 78 L22 90 L0 90 Z" fill="#29471a"/>
<path d="M0 67 L10 77 L20 90" stroke="#7f8f88" stroke-width="1.5" fill="none"/>
<ellipse cx="17" cy="52" rx="2.8" ry="3.2" fill="#1b2b12"/>
<ellipse cx="29.5" cy="52" rx="2.4" ry="1.3" fill="#26351c"/>
</g>
</g>
</svg>
<span class="t" id="rpp" style="left:1813.99px;top:1057.08px;font-size:25.90px;color:#212121;letter-spacing:0.277px;-webkit-text-stroke:0.31px #212121;transform:scaleX(0.9578);">Rows per page:</span>
<span class="t" id="ten" style="left:2019.91px;top:1056.08px;font-size:25.90px;color:#212121;letter-spacing:0.277px;-webkit-text-stroke:0.31px #212121;transform:scaleX(0.9457);">10</span>
<svg class="ic" style="left:2049.50px;top:1048.20px;width:42.70px;height:42.70px" viewBox="0 0 24 24" fill="#757575" ><path d="M7 10l5 5 5-5z"/></svg>
<span class="t" id="range" style="left:2148.95px;top:1057.08px;font-size:25.90px;color:#212121;letter-spacing:0.277px;-webkit-text-stroke:0.31px #212121;transform:scaleX(0.9685);">1-4 of 4</span>
<div class="b" style="left:2304.80px;top:277.80px;width:683.20px;height:897.00px;background:#fff;border-radius:7.4px;box-shadow:0 3.7px 1.8px -1.8px rgba(0,0,0,.2),0 1.8px 1.8px rgba(0,0,0,.14),0 1.8px 5.5px rgba(0,0,0,.12);"></div>
<div class="b" style="left:2304.80px;top:1059.90px;width:683.20px;height:114.90px;background:#dfdfdf;border-radius:0 0 7.4px 7.4px;"></div>
<span class="t" id="ptitle" style="left:2332.87px;top:317.95px;font-size:35.50px;color:#212121;letter-spacing:0.380px;-webkit-text-stroke:0.43px #212121;transform:scaleX(1.0018);">Download Reward Promo</span>
<span class="t" id="pp1" style="left:2333.48px;top:386.21px;font-size:22.20px;color:#212121;letter-spacing:0.739px;-webkit-text-stroke:0.27px #212121;transform:scaleX(0.9717);">Promote your download rewards on the home screen of your</span>
<span class="t" id="pp2" style="left:2333.47px;top:421.21px;font-size:22.20px;color:#212121;letter-spacing:0.739px;-webkit-text-stroke:0.27px #212121;transform:scaleX(0.9776);">app. You can customize the promo below.</span>
<div class="b" style="left:2334.00px;top:479.10px;width:208.00px;height:53.70px;border:1.3px solid #a79de4;border-radius:7.4px;"></div>
<span class="t" id="viewex" style="left:2352.58px;top:492.68px;font-size:24.00px;color:#4c3cc1;letter-spacing:0.686px;-webkit-text-stroke:1.01px #4c3cc1;transform:scaleX(0.9098);">VIEW EXAMPLE</span>
<div class="b" style="left:2335.90px;top:583.10px;width:62.00px;height:25.00px;background:#a79de4;border-radius:12.5px;"></div>
<div class="b" style="left:2366.50px;top:578.10px;width:35.60px;height:35.60px;background:#4c3cc1;border-radius:50%;box-shadow:0 3.7px 2px -1.8px rgba(0,0,0,.2),0 1.8px 1.8px rgba(0,0,0,.14),0 1.8px 5.5px rgba(0,0,0,.12);"></div>
<span class="t" id="promo" style="left:2417.65px;top:579.94px;font-size:29.60px;color:#212121;letter-spacing:0.317px;-webkit-text-stroke:0.36px #212121;transform:scaleX(0.9738);">Promote in app</span>
<div class="b" style="left:2334.00px;top:659.00px;width:601.20px;height:127.50px;background:#fafafa;border-radius:7.4px;"></div>
<span class="t" id="drop" style="left:2346.94px;top:706.94px;font-size:29.60px;color:#212121;letter-spacing:0.317px;-webkit-text-stroke:0.36px #212121;transform:scaleX(0.9740);">Drop a picture to upload, or click to select it.</span>
<div class="b" style="left:2326.20px;top:640.10px;width:621.80px;height:152.90px;border:4px solid #e83e23;"></div>
<span class="t" id="imgmust" style="left:2332.44px;top:801.21px;font-size:22.20px;color:#666;letter-spacing:0.739px;-webkit-text-stroke:0.27px #666;transform:scaleX(0.9785);">Image must be smaller than 5MB.</span>
<div class="b" style="left:2334.00px;top:859.10px;width:600.90px;height:70.60px;border:1.4px solid #c2c2c4;border-radius:7.4px;"></div>
<span class="t" id="in1" style="left:2359.05px;top:878.94px;font-size:29.60px;color:#6b6b6b;letter-spacing:0.317px;-webkit-text-stroke:0.36px #6b6b6b;transform:scaleX(0.9865);">Customize promo title</span>
<div class="b" style="left:2334.00px;top:960.20px;width:600.90px;height:70.60px;border:1.4px solid #c2c2c4;border-radius:7.4px;"></div>
<span class="t" id="in2" style="left:2359.05px;top:979.94px;font-size:29.60px;color:#6b6b6b;letter-spacing:0.317px;-webkit-text-stroke:0.36px #6b6b6b;transform:scaleX(0.9845);">Customize promo description</span>
<div class="b" style="left:2348.20px;top:1084.70px;width:168.80px;height:64.90px;background:#4c3cc1;border-radius:7.4px;box-shadow:0 5.5px 2px -3.7px rgba(0,0,0,.2),0 3.7px 3.7px rgba(0,0,0,.14),0 1.8px 9px rgba(0,0,0,.12);"></div>
<svg class="ic" style="left:2377.00px;top:1100.80px;width:33.00px;height:33.00px" viewBox="0 0 24 24" fill="#fff" ><path d="M17 3H5c-1.11 0-2 .9-2 2v14c0 1.1.89 2 2 2h14c1.1 0 2-.9 2-2V7l-4-4zm-5 16c-1.66 0-3-1.34-3-3s1.34-3 3-3 3 1.34 3 3-1.34 3-3 3zm3-10H5V5h10v4z"/></svg>
<span class="t" id="save" style="left:2424.23px;top:1102.81px;font-size:25.50px;color:#fff;letter-spacing:0.729px;-webkit-text-stroke:1.07px #fff;transform:scaleX(0.9181);">SAVE</span>
<svg class="ic" style="left:2108.20px;top:705.00px;width:205.70px;height:24px" viewBox="0 0 205.70 24"><rect x="0" y="9.8" width="188.70" height="4.4" fill="#e83e23"/><path d="M185.70 1.9 L205.70 12 L185.70 22.1 Z" fill="#e83e23"/></svg>
<svg class="ic" style="left:2119.90px;top:884.20px;width:204.90px;height:24px" viewBox="0 0 204.90 24"><rect x="0" y="9.8" width="187.90" height="4.4" fill="#e83e23"/><path d="M184.90 1.9 L204.90 12 L184.90 22.1 Z" fill="#e83e23"/></svg>
<svg class="ic" style="left:2119.00px;top:983.60px;width:205.80px;height:24px" viewBox="0 0 205.80 24"><rect x="0" y="9.8" width="188.80" height="4.4" fill="#e83e23"/><path d="M185.80 1.9 L205.80 12 L185.80 22.1 Z" fill="#e83e23"/></svg>
</div>
</body></html>
